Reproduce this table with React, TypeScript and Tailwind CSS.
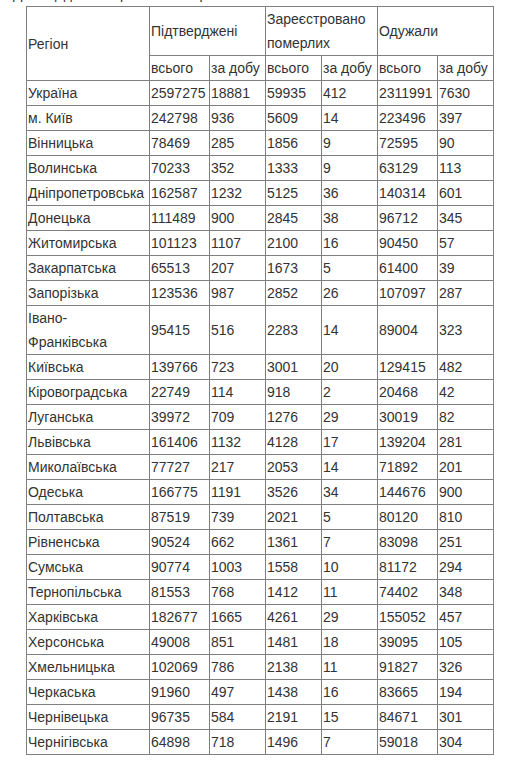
import React from "react";

const rows: [React.ReactNode, string, string, string, string, string, string][] = [
  ["м. Київ", "242798", "936", "5609", "14", "223496", "397"],
  ["Вінницька", "78469", "285", "1856", "9", "72595", "90"],
  ["Волинська", "70233", "352", "1333", "9", "63129", "113"],
  ["Дніпропетровська", "162587", "1232", "5125", "36", "140314", "601"],
  ["Донецька", "111489", "900", "2845", "38", "96712", "345"],
  ["Житомирська", "101123", "1107", "2100", "16", "90450", "57"],
  ["Закарпатська", "65513", "207", "1673", "5", "61400", "39"],
  ["Запорізька", "123536", "987", "2852", "26", "107097", "287"],
  [
    <>
      Івано-
      <br />
      Франківська
    </>,
    "95415",
    "516",
    "2283",
    "14",
    "89004",
    "323",
  ],
  ["Київська", "139766", "723", "3001", "20", "129415", "482"],
  ["Кіровоградська", "22749", "114", "918", "2", "20468", "42"],
  ["Луганська", "39972", "709", "1276", "29", "30019", "82"],
  ["Львівська", "161406", "1132", "4128", "17", "139204", "281"],
  ["Миколаївська", "77727", "217", "2053", "14", "71892", "201"],
  ["Одеська", "166775", "1191", "3526", "34", "144676", "900"],
  ["Полтавська", "87519", "739", "2021", "5", "80120", "810"],
  ["Рівненська", "90524", "662", "1361", "7", "83098", "251"],
  ["Сумська", "90774", "1003", "1558", "10", "81172", "294"],
  ["Тернопільська", "81553", "768", "1412", "11", "74402", "348"],
  ["Харківська", "182677", "1665", "4261", "29", "155052", "457"],
  ["Херсонська", "49008", "851", "1481", "18", "39095", "105"],
  ["Хмельницька", "102069", "786", "2138", "11", "91827", "326"],
  ["Черкаська", "91960", "497", "1438", "16", "83665", "194"],
  ["Чернівецька", "96735", "584", "2191", "15", "84671", "301"],
  ["Чернігівська", "64898", "718", "1496", "7", "59018", "304"],
];

const td = "border border-[#808080] px-[1px] py-0 align-middle text-left font-normal";

export default function App() {
  return (
    <div
      className="bg-white text-[#333] text-[14px] leading-6 w-[506px] h-[761px] overflow-hidden"
      style={{ fontFamily: '"Liberation Sans", Arial, sans-serif' }}
    >
      <div className="h-[6px] overflow-hidden">
        <div className="-mt-[18px] pl-[13px] whitespace-nowrap">
          Дані щодо захворювання по регіонах
        </div>
      </div>
      <table className="ml-[26px] w-[467px] table-fixed border-collapse">
        <colgroup>
          <col className="w-[123px]" />
          <col className="w-[60px]" />
          <col className="w-[56px]" />
          <col className="w-[56px]" />
          <col className="w-[56px]" />
          <col className="w-[60px]" />
          <col className="w-[56px]" />
        </colgroup>
        <thead>
          <tr>
            <th rowSpan={2} className={td}>Регіон</th>
            <th colSpan={2} className={td}>Підтверджені</th>
            <th colSpan={2} className={td}>Зареєстровано померлих</th>
            <th colSpan={2} className={td}>Одужали</th>
          </tr>
          <tr>
            <td className={td + " font-bold"}>всього</td>
            <td className={td + " font-bold"}>за добу</td>
            <td className={td + " font-bold"}>всього</td>
            <td className={td + " font-bold"}>за добу</td>
            <td className={td + " font-bold"}>всього</td>
            <td className={td + " font-bold"}>за добу</td>
          </tr>
        </thead>
        <tbody>
          <tr>
            {["Україна", "2597275", "18881", "59935", "412", "2311991", "7630"].map((c, i) => (
              <td key={i} className={td + " font-bold"}>{c}</td>
            ))}
          </tr>
          {rows.map((r, ri) => (
            <tr key={ri}>
              {r.map((c, i) => (
                <td key={i} className={td}>{c}</td>
              ))}
            </tr>
          ))}
        </tbody>
      </table>
    </div>
  );
}
